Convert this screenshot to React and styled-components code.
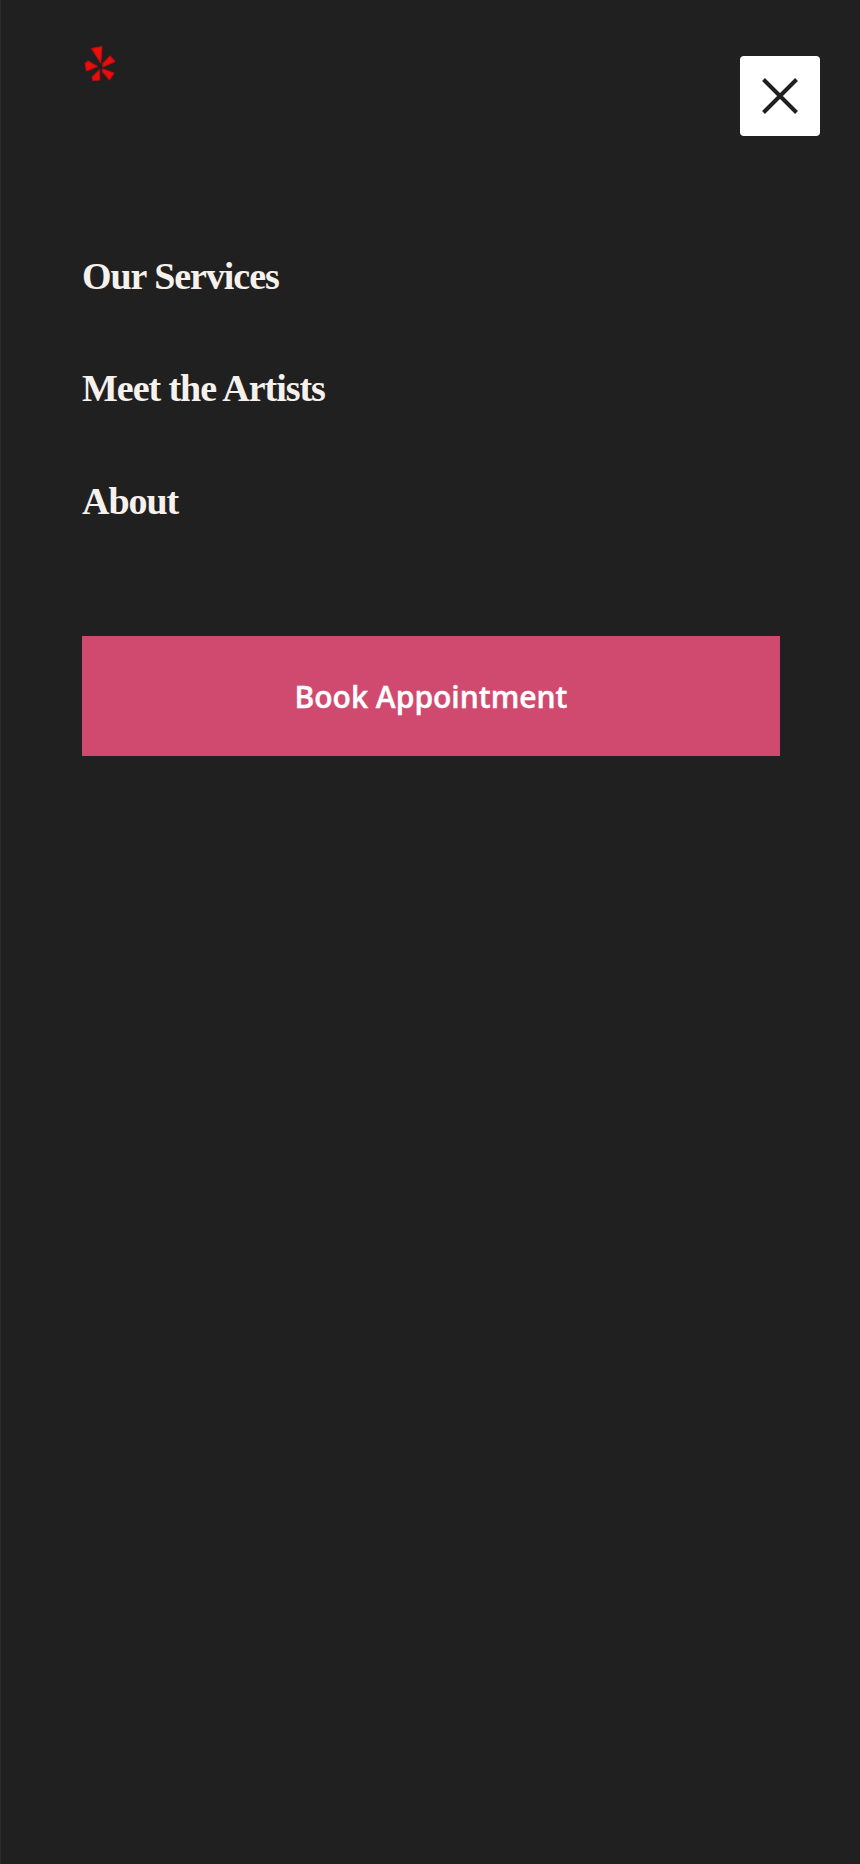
import React from "react";
import styled, { createGlobalStyle } from "styled-components";

const Global = createGlobalStyle`
  html, body { margin: 0; padding: 0; background: #202020; }
`;

const Page = styled.div`
  box-sizing: border-box;
  width: 860px;
  height: 1864px;
  background: #202020;
  border-left: 1px solid #2c2c2c;
  padding: 44px 40px 0 81px;
`;

const Header = styled.header`
  display: flex;
  justify-content: space-between;
  align-items: flex-start;
`;

const Logo = styled.svg`
  display: block;
  width: 36px;
  height: 40px;
  margin-left: 1px;
`;

const CloseButton = styled.button`
  width: 80px;
  height: 80px;
  margin-top: 12px;
  padding: 0;
  border: 0;
  border-radius: 4px;
  background: #fff;
  display: flex;
  align-items: center;
  justify-content: center;
`;

const Nav = styled.nav`
  display: flex;
  flex-direction: column;
  gap: 72.4px;
  margin-top: 120px;
`;

const NavLink = styled.a`
  font-family: "Liberation Serif", serif;
  font-weight: 700;
  font-size: 38px;
  line-height: 40px;
  letter-spacing: -1.05px;
  color: #f6f1ec;
`;

const BookButton = styled.a`
  display: flex;
  align-items: center;
  justify-content: center;
  width: 698px;
  height: 120px;
  margin-top: 115px;
  padding-top: 2px;
  box-sizing: border-box;
  background: #d04a70;
  color: #fff;
  font-family: "Open Sans", sans-serif;
  font-weight: 600;
  font-size: 30px;
  -webkit-text-stroke: 0.4px #fff;
`;

export default function App() {
  return (
    <>
      <Global />
      <Page>
        <Header>
          <Logo viewBox="83 44 36 40">
            <defs>
              <filter id="soft" x="-10%" y="-10%" width="120%" height="120%">
                <feGaussianBlur stdDeviation="0.5" />
              </filter>
            </defs>
            <g fill="#ec1010" stroke="#b80c0c" strokeWidth="1.2" strokeLinejoin="round" filter="url(#soft)">
              <path d="M91.5 48.5 L102 46.5 L100.8 63 Z" />
              <path d="M102.8 63.5 L110 56 L115 61.5 L103 67 Z" />
              <path d="M103 69 L114 73 L109.5 80 L102 71 Z" />
              <path d="M99.5 70 L99.8 80 L93 80.5 L92 77 Z" />
              <path d="M97.5 66.5 L86.5 71 L85 63.5 L88 61 Z" />
            </g>
          </Logo>
          <CloseButton aria-label="Close">
            <svg width="38" height="38" viewBox="0 0 38 38">
              <path d="M2.5 2.5 L35.5 35.5 M35.5 2.5 L2.5 35.5" stroke="#202020" strokeWidth="4" />
            </svg>
          </CloseButton>
        </Header>
        <Nav>
          <NavLink>Our Services</NavLink>
          <NavLink>Meet the Artists</NavLink>
          <NavLink>About</NavLink>
        </Nav>
        <BookButton>Book Appointment</BookButton>
      </Page>
    </>
  );
}
